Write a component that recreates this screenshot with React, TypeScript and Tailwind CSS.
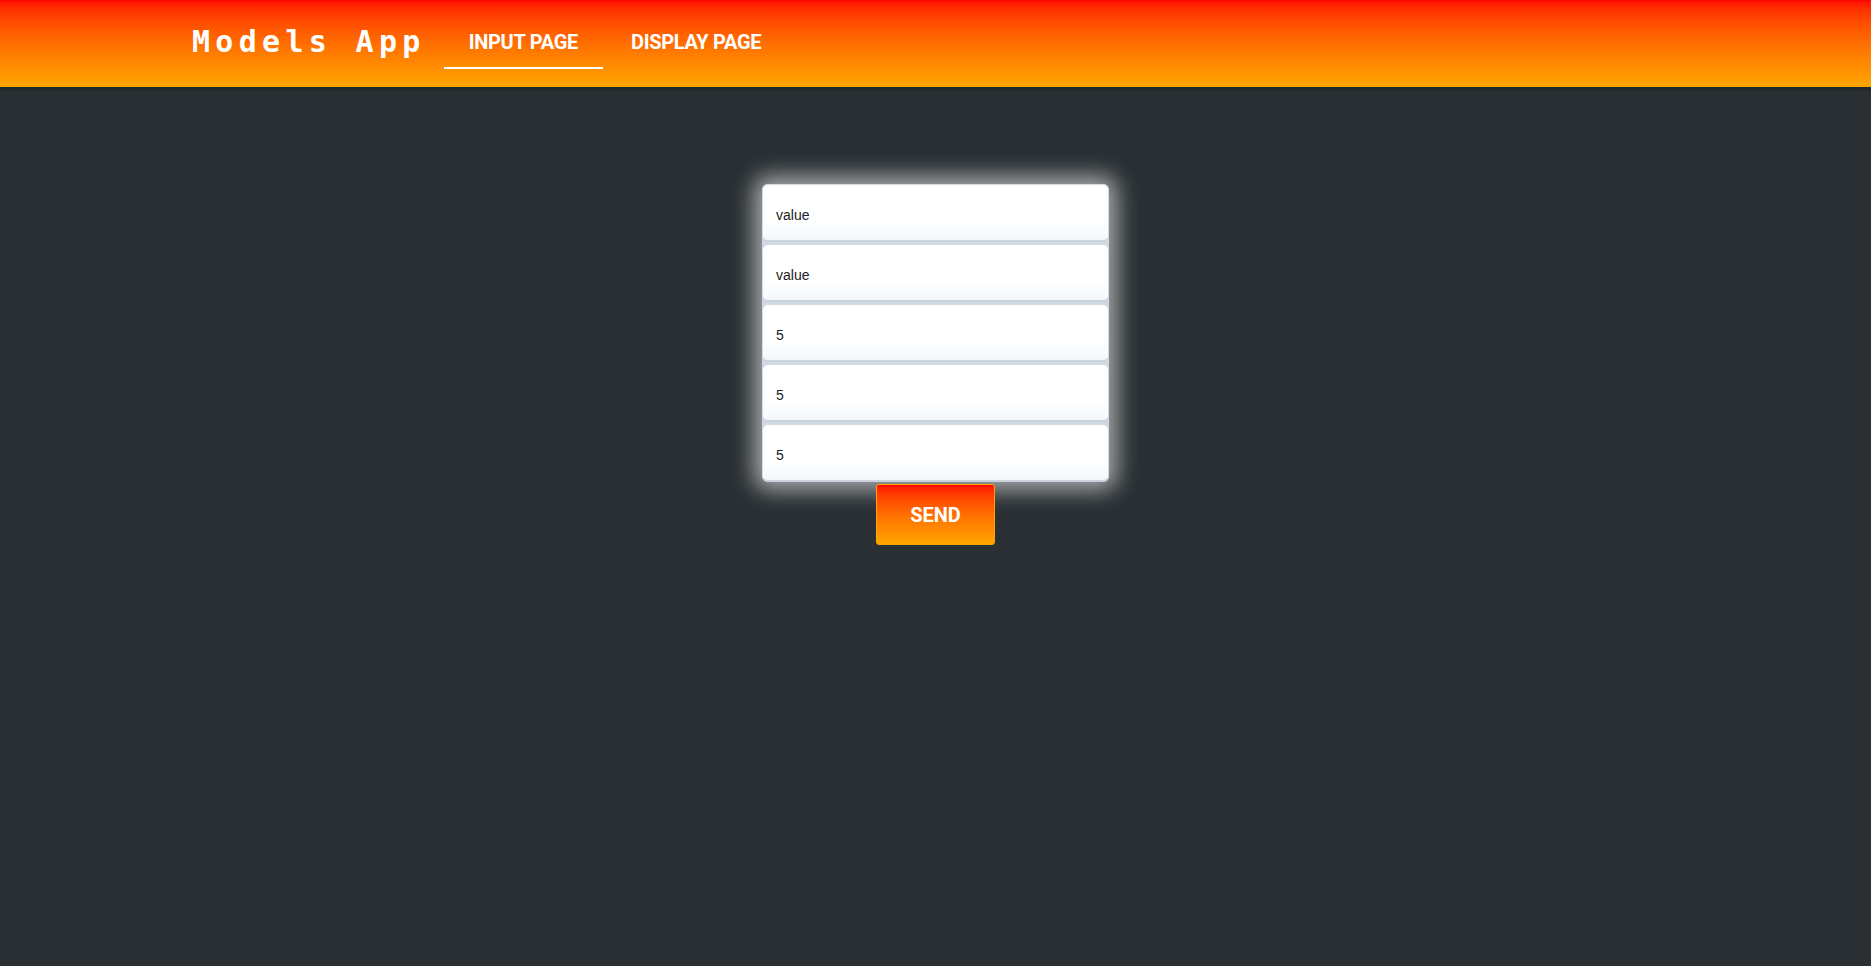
import React from "react";

export default function App() {
  const values = ["value", "value", "5", "5", "5"];
  return (
    <div className="min-h-screen bg-[#292f33]" style={{ fontFamily: "Roboto, 'Liberation Sans', sans-serif" }}>
      <header className="relative z-10 h-[87px] bg-gradient-to-b from-[#ff0000] to-[#ffa500] shadow-[0_2px_3px_rgba(0,0,0,0.3)] flex items-center pl-[192px]">
        <div
          className="text-white text-[30px] font-bold tracking-[5.3px] leading-none mt-[-4px]"
          style={{ fontFamily: "'DejaVu Sans Mono', 'Liberation Mono', monospace" }}
        >
          Models App
        </div>
        <nav className="flex h-full ml-[18px]">
          <div className="relative h-full flex items-center px-[25px] text-white text-[20px] font-bold tracking-[-0.3px] mt-[-2px]">
            INPUT PAGE
            <span className="absolute left-0 right-0 top-[69px] h-[2px] bg-white" />
          </div>
          <div className="h-full flex items-center px-[25px] ml-[3px] text-white text-[20px] font-bold tracking-[-0.3px] mt-[-2px]">
            DISPLAY PAGE
          </div>
        </nav>
      </header>
      <main className="flex flex-col items-center pt-[97px]">
        <div className="w-[347px] flex flex-col gap-[2px] rounded-[6px] bg-[#d0d8e1] shadow-[0_0_22px_8px_rgba(255,255,255,0.6)]">
          {values.map((v, i) => (
            <div
              key={i}
              className="h-[58px] rounded-[6px] border border-[#d3dae3] border-b-[2px] border-b-[#cbd3dd] bg-gradient-to-b from-white from-65% to-[#f3f7fc] flex items-center pl-[13px] pt-[5px] text-[14px] text-[#222]"
              style={{ fontFamily: "'Liberation Sans', Arial, sans-serif" }}
            >
              {v}
            </div>
          ))}
        </div>
        <button className="mt-[2px] w-[119px] h-[61px] rounded-[3px] border border-[#ffa500] bg-gradient-to-b from-[#ff0000] to-[#ffa500] text-white text-[20px] font-bold">
          SEND
        </button>
      </main>
    </div>
  );
}
